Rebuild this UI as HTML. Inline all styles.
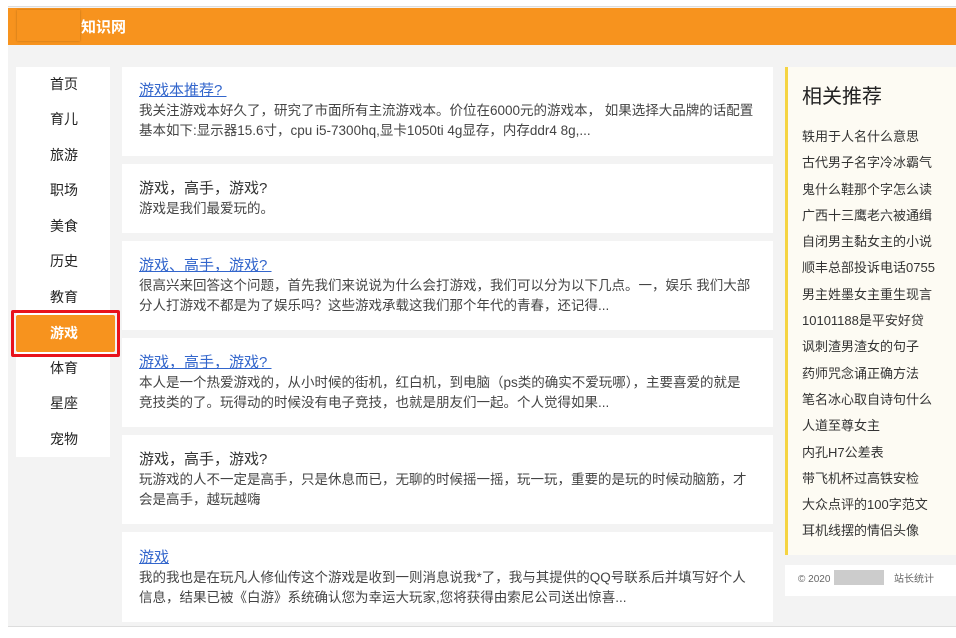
<!DOCTYPE html>
<html><head><meta charset="utf-8"><style>
*{margin:0;padding:0;box-sizing:border-box}
body{width:956px;height:638px;background:#fff;font-family:"Liberation Sans","Noto Sans CJK SC",sans-serif;position:relative;overflow:hidden;color:#333}
#frame{position:absolute;left:8px;top:6px;width:948px;height:621px;background:#f3f3f3;border-top:1px solid #ddd;border-bottom:1px solid #ddd}
#hdr{position:absolute;left:8px;top:8px;width:948px;height:37px;background:#f7931e}
#logo{position:absolute;left:17px;top:10px;width:63px;height:31px;background:#f7931e;box-shadow:0 0 2px rgba(0,0,0,.25)}
#hdr span{position:absolute;left:73px;top:8px;color:#fff;font-weight:bold;font-size:15px}
#nav{position:absolute;left:16px;top:67px;width:94px;height:390px;background:#fff}
.ni{position:absolute;left:0;width:94px;height:20px;font-size:14px;padding-left:34px;line-height:20px;color:#222}
.act{position:absolute;left:11px;top:310px;width:109px;height:47px;border:3px solid #e8121b;border-radius:2px}
.act div{position:absolute;left:2px;top:2px;width:99px;height:37px;background:#f7931e;border-radius:2px;color:#fff;font-weight:bold;font-size:14px;line-height:37px;padding-left:34px}
.card{position:absolute;left:122px;width:651px;background:#fff;padding:0 17px 0 17px}
.card .t{font-size:15px;line-height:20px;color:#333}
.card a{color:#3366cc;text-decoration:underline}
.card p{font-size:13.5px;line-height:20px;color:#444;padding-right:0}
#side{position:absolute;left:785px;top:67px;width:171px;height:488px;background:#fdfbf3;border-left:3px solid #f5d442}
#side h3{position:absolute;left:14px;top:13px;font-size:20px;font-weight:normal;color:#222}
#side ul{position:absolute;left:14px;top:60px;list-style:none}
#side li{font-size:13px;height:26.3px;line-height:20px;color:#333;white-space:nowrap}
#foot{position:absolute;left:785px;top:565px;width:171px;height:31px;background:#fff;font-size:10px;color:#666;line-height:30px}
</style></head><body>
<div id="frame"></div>
<div id="hdr"><span>知识网</span></div>
<div id="logo"></div>
<div id="nav">
<div class="ni" style="top:7px">首页</div>
<div class="ni" style="top:42px">育儿</div>
<div class="ni" style="top:78px">旅游</div>
<div class="ni" style="top:113px">职场</div>
<div class="ni" style="top:149px">美食</div>
<div class="ni" style="top:184px">历史</div>
<div class="ni" style="top:220px">教育</div>
<div class="ni" style="top:291px">体育</div>
<div class="ni" style="top:326px">星座</div>
<div class="ni" style="top:362px">宠物</div>
</div>
<div class="act"><div>游戏</div></div>

<div class="card" style="top:67px;height:89px;padding-top:14px"><div class="t"><a>游戏本推荐?&nbsp;</a></div><p>我关注游戏本好久了，研究了市面所有主流游戏本。价位在6000元的游戏本， 如果选择大品牌的话配置<br>基本如下:显示器15.6寸，cpu i5-7300hq,显卡1050ti 4g显存，内存ddr4 8g,...</p></div>
<div class="card" style="top:164px;height:69px;padding-top:15px"><div class="t">游戏，高手，游戏?</div><p>游戏是我们最爱玩的。</p></div>
<div class="card" style="top:241px;height:89px;padding-top:15px"><div class="t"><a>游戏、高手，游戏?&nbsp;</a></div><p>很高兴来回答这个问题，首先我们来说说为什么会打游戏，我们可以分为以下几点。一，娱乐 我们大部<br>分人打游戏不都是为了娱乐吗？这些游戏承载这我们那个年代的青春，还记得...</p></div>
<div class="card" style="top:338px;height:89px;padding-top:15px"><div class="t"><a>游戏，高手，游戏?&nbsp;</a></div><p>本人是一个热爱游戏的，从小时候的街机，红白机，到电脑（ps类的确实不爱玩哪），主要喜爱的就是<br>竞技类的了。玩得动的时候没有电子竞技，也就是朋友们一起。个人觉得如果...</p></div>
<div class="card" style="top:435px;height:89px;padding-top:15px"><div class="t">游戏，高手，游戏?</div><p>玩游戏的人不一定是高手，只是休息而已，无聊的时候摇一摇，玩一玩，重要的是玩的时候动脑筋，才<br>会是高手，越玩越嗨</p></div>
<div class="card" style="top:532px;height:90px;padding-top:16px"><div class="t"><a>游戏</a></div><p>我的我也是在玩凡人修仙传这个游戏是收到一则消息说我*了，我与其提供的QQ号联系后并填写好个人<br>信息，结果已被《白游》系统确认您为幸运大玩家,您将获得由索尼公司送出惊喜...</p></div>

<div id="side"><h3>相关推荐</h3><ul>
<li>轶用于人名什么意思</li><li>古代男子名字冷冰霸气</li><li>鬼什么鞋那个字怎么读</li><li>广西十三鹰老六被通缉</li><li>自闭男主黏女主的小说</li><li>顺丰总部投诉电话0755</li><li>男主姓墨女主重生现言</li><li>10101188是平安好贷</li><li>讽刺渣男渣女的句子</li><li>药师咒念诵正确方法</li><li>笔名冰心取自诗句什么</li><li>人道至尊女主</li><li>内孔H7公差表</li><li>带飞机杯过高铁安检</li><li>大众点评的100字范文</li><li>耳机线摆的情侣头像</li></ul></div>
<div id="foot"><span style="position:absolute;left:13px">© 2020</span><span style="position:absolute;left:49px;top:5px;width:50px;height:15px;background:#ccc"></span><span style="position:absolute;left:109px">站长统计</span></div>
</body></html>
